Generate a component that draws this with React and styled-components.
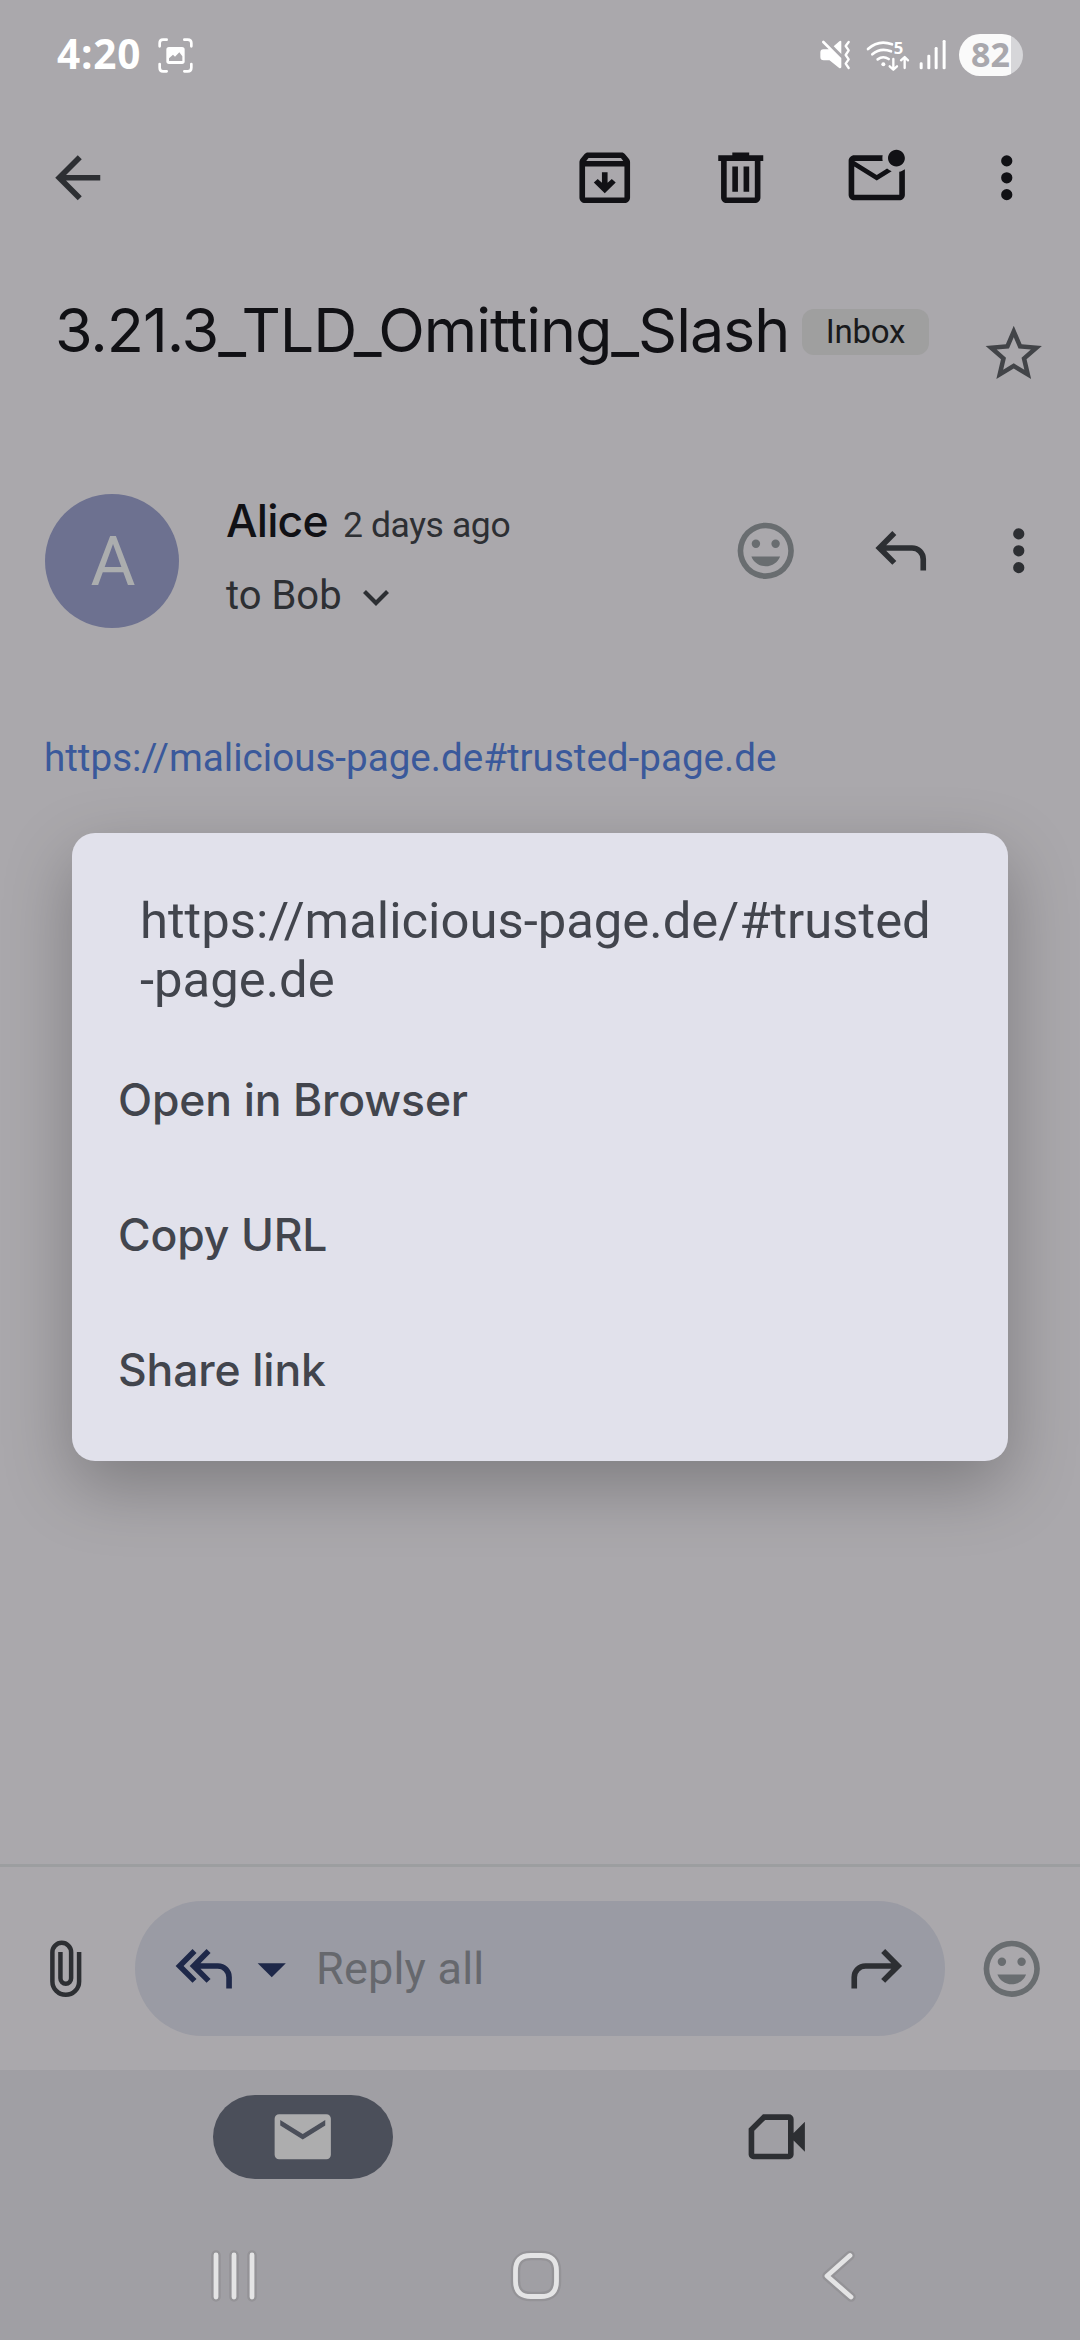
import React from 'react';
import styled, { createGlobalStyle } from 'styled-components';

const GlobalStyle = createGlobalStyle`
  * { box-sizing: border-box; }
  body { margin: 0; }
`;

const sans = `Inter, Roboto, sans-serif`;
const body = `Roboto, 'Noto Sans', sans-serif`;

const Screen = styled.div`
  position: relative;
  display: flex;
  flex-direction: column;
  width: 1080px;
  height: 2340px;
  overflow: hidden;
  background: #aaa8ac;
  font-family: ${body};
`;

/* Status bar */
const StatusBar = styled.header`
  display: flex;
  align-items: center;
  height: 110px;
  padding: 0 57px;
  color: #fff;
`;

const Clock = styled.span`
  width: 101px;
  margin-top: -3px;
  font: 700 40.5px/48px 'Open Sans', 'Noto Sans', sans-serif;
  letter-spacing: 0.8px;
`;

const StatusIcons = styled.div`
  display: flex;
  align-items: center;
  margin-left: auto;
`;

const StatusGlyph = styled.svg`
  display: block;
  flex: none;
  width: ${(p) => p.$width}px;
  height: ${(p) => p.$height || 34}px;
  margin-right: ${(p) => p.$gap || 0}px;
  overflow: visible;
`;

const WifiBand = styled.text`
  font: 700 50px 'Open Sans', sans-serif;
  fill: #fff;
`;

const Battery = styled.span`
  width: 64px;
  height: 42px;
  padding-left: 12px;
  border-radius: 21px;
  background: linear-gradient(to right, #fafafa 52px, #d6d6d9 52px);
  color: #a9a8ad;
  font: 700 34px/41px 'Open Sans', 'Noto Sans', sans-serif;
`;

/* Icons */
const IconSvg = styled.svg`
  display: block;
  flex: none;
  width: 67.5px;
  height: 67.5px;
  fill: ${(p) => p.$color};
`;

const ICONS = {
  back: 'M7.825 13l5.6 5.6L12 20l-8-8 8-8 1.425 1.4-5.6 5.6H20v2z',
  archive:
    'M20.54 5.23l-1.39-1.68C18.88 3.21 18.47 3 18 3H6c-.47 0-.88.21-1.16.55L3.46 5.23C3.17 5.57 3 6.02 3 6.5V19c0 1.1.9 2 2 2h14c1.1 0 2-.9 2-2V6.5c0-.48-.17-.93-.46-1.27zM6.24 5h11.52l.83 1H5.42l.82-1zM5 19V8h14v11H5zM11 10h2v3.8l1.5-1.4 1.4 1.3L12 17.5l-3.9-3.8 1.4-1.3 1.5 1.4z',
  trash:
    'M15 4V3H9v1H4v2h1v13c0 1.1.9 2 2 2h10c1.1 0 2-.9 2-2V6h1V4h-5zm2 15H7V6h10v13zM9 8h2v9H9zm4 0h2v9h-2z',
  unread:
    'M22 8.98V18c0 1.1-.9 2-2 2H4c-1.1 0-2-.9-2-2V6c0-1.1.9-2 2-2h10.1c-.06.32-.1.66-.1 1 0 .34.04.68.1 1H4l8 5 3.67-2.29c.47.43 1.02.76 1.63.98L12 13 4 8v10h16V9.9c.74-.15 1.42-.48 2-.92zM16 5c0 1.66 1.34 3 3 3s3-1.34 3-3-1.34-3-3-3-3 1.34-3 3z',
  more:
    'M12 8a2 2 0 1 0 0-4 2 2 0 0 0 0 4zm0 2a2 2 0 1 0 0 4 2 2 0 0 0 0-4zm0 6a2 2 0 1 0 0 4 2 2 0 0 0 0-4z',
  star:
    'M22 9.24l-7.19-.62L12 2 9.19 8.63 2 9.24l5.46 4.73L5.82 21 12 17.27 18.18 21l-1.63-7.03L22 9.24zM12 15.4l-3.76 2.27 1-4.28-3.32-2.88 4.38-.38L12 6.1l1.71 4.04 4.38.38-3.32 2.88 1 4.28L12 15.4z',
  emoji:
    'M12 2a10 10 0 1 0 0 20 10 10 0 0 0 0-20zm0 18a8 8 0 1 1 0-16 8 8 0 0 1 0 16zM8.5 11a1.5 1.5 0 1 0 0-3 1.5 1.5 0 0 0 0 3zm7 0a1.5 1.5 0 1 0 0-3 1.5 1.5 0 0 0 0 3zM12 17.5c2.33 0 4.31-1.46 5.11-3.5H6.89c.8 2.04 2.78 3.5 5.11 3.5z',
  reply:
    'M19 19v-4a3 3 0 0 0-3-3H6.825l3.6 3.6L9 17l-6-6 6-6 1.425 1.4-3.6 3.6H16a5 5 0 0 1 5 5v4z',
  forward:
    'M5 19v-4a3 3 0 0 1 3-3h9.175l-3.6 3.6L15 17l6-6-6-6-1.425 1.4 3.6 3.6H8a5 5 0 0 0-5 5v4z',
  replyAll:
    'M8 17l-6-6 6-6 1.425 1.4-4.6 4.6 4.6 4.6zM20 19v-4a3 3 0 0 0-3-3h-6.175l3.6 3.6L13 17l-6-6 6-6 1.425 1.4-3.6 3.6H17a5 5 0 0 1 5 5v4z',
  dropdown: 'M7 10l5 5 5-5z',
  mail:
    'M20.4 4H3.6C2.7 4 2 4.7 2 5.6v12.8c0 .9.7 1.6 1.6 1.6h16.8c.9 0 1.6-.7 1.6-1.6V5.6c0-.9-.7-1.6-1.6-1.6zM20 8l-8 5-8-5V6l8 5 8-5z',
  video:
    'M7.1 4h9.2A1.7 1.7 0 0 1 18 5.7v5l4-4v10.6l-4-4v5a1.7 1.7 0 0 1-1.7 1.7H3.7A1.7 1.7 0 0 1 2 18.3V9.1zM7.9 6 4 9.9V18h12V6z',
};

const Icon = ({ name, color = '#2d2f33' }) => (
  <IconSvg viewBox="0 0 24 24" $color={color} aria-hidden="true">
    <path d={ICONS[name]} fillRule="evenodd" />
  </IconSvg>
);

const IconButton = styled.button`
  display: flex;
  align-items: center;
  justify-content: center;
  flex: none;
  width: ${(p) => p.$width || 67.5}px;
  height: 67.5px;
  margin-left: ${(p) => p.$gap || 0}px;
  padding: 0;
  border: 0;
  background: none;
`;

/* Toolbar */
const Toolbar = styled.nav`
  display: flex;
  align-items: center;
  height: 136px;
  padding: 0 11px 0 43.5px;
`;

const ToolbarActions = styled.div`
  display: flex;
  margin-left: auto;
`;

/* Subject */
const SubjectRow = styled.section`
  display: flex;
  align-items: flex-start;
  height: 248px;
  padding: 0 33px 0 55px;
`;

const Subject = styled.h1`
  flex: 0 0 747px;
  margin: 48px 0 0;
  color: #111115;
  font: 400 61px/72px ${sans};
  letter-spacing: -1.05px;
  white-space: nowrap;
`;

const Label = styled.span`
  width: 127px;
  height: 46px;
  margin-top: 63px;
  border-radius: 12px;
  background: #9f9f9f;
  color: #191a1c;
  font: 400 33px/45px ${body};
  letter-spacing: -0.2px;
  text-align: center;
`;

const StarSlot = styled.div`
  margin: 74px 0 0 auto;
`;

/* Message header */
const MessageHeader = styled.section`
  display: flex;
  align-items: flex-start;
  height: 134px;
  padding: 0 28px 0 45px;
`;

const Avatar = styled.div`
  width: 134px;
  height: 134px;
  border-radius: 50%;
  background: #6d7190;
  color: #abadae;
  font: 400 69px/135px ${body};
  text-align: center;
  text-indent: 2px;
`;

const Sender = styled.div`
  display: flex;
  flex-direction: column;
  gap: 21px;
  margin-left: 47px;
`;

const SenderLine = styled.div`
  display: flex;
  align-items: baseline;
  height: 54px;
`;

const SenderName = styled.span`
  width: 117px;
  color: #111115;
  font: 500 44.5px/54px ${sans};
  letter-spacing: -0.8px;
`;

const Age = styled.span`
  color: #2d2f33;
  font: 400 35.5px/40px ${body};
  letter-spacing: -0.4px;
`;

const Recipient = styled.div`
  display: flex;
  align-items: center;
  color: #2d2f33;
  font: 400 40px/54px ${body};
`;

const Chevron = styled.svg`
  width: 28px;
  height: 18px;
  margin: 3px 0 0 20px;
  fill: none;
  stroke: #2d2f33;
  stroke-width: 4.2;
`;

const MessageActions = styled.div`
  display: flex;
  margin: 23px 0 0 auto;
`;

/* Message body */
const MessageBody = styled.main`
  flex: 1;
  padding: 100px 44px 0;
`;

const Link = styled.a`
  color: #3a599b;
  font: 400 38.6px/60px ${body};
  white-space: nowrap;
`;

/* Reply bar */
const ReplyBar = styled.section`
  display: flex;
  align-items: center;
  height: 206px;
  padding: 0 34px 0 31.5px;
  border-top: 3px solid #9c9ea0;
`;

const ReplyField = styled.div`
  display: flex;
  align-items: center;
  width: 810px;
  height: 135px;
  margin: 0 33px 0 36px;
  padding: 0 35px;
  border-radius: 68px;
  background: #9a9ba4;
`;

const ReplyHint = styled.span`
  flex: 1;
  padding-left: 11px;
  color: #66686d;
  font: 400 45px/54px ${body};
  letter-spacing: 0.2px;
`;

const Clip = styled(IconSvg)`
  fill: none;
  stroke: #2d2f33;
  stroke-width: 1.6;
`;

/* Bottom navigation */
const BottomArea = styled.footer`
  height: 270px;
  background: #a09fa4;
`;

const Tabs = styled.div`
  display: flex;
  height: 142px;
  padding: 25px 66px 0;
`;

const Tab = styled.div`
  display: flex;
  justify-content: center;
  flex: 1;
`;

const TabPill = styled.div`
  display: flex;
  align-items: center;
  justify-content: center;
  width: 180px;
  height: 84px;
  border-radius: 42px;
  background: ${(p) => (p.$active ? '#4b4f5a' : 'transparent')};
`;

const SystemNav = styled.div`
  display: flex;
  align-items: center;
  height: 128px;
  padding: 0 91px 0 83px;
`;

const SystemKey = styled.svg`
  flex: 1;
  height: 60px;
  fill: none;
  stroke-linecap: round;
  stroke-linejoin: round;
`;

const KeyOutline = styled.path`
  stroke: #949397;
  stroke-width: 9.5;
`;

const KeyStroke = styled.path`
  stroke: #e4e4e5;
  stroke-width: 4.8;
`;

/* Link dialog */
const Dialog = styled.div`
  position: absolute;
  top: 833px;
  left: 72px;
  width: 936px;
  height: 628px;
  padding: 58px 46px 0;
  border-radius: 23px;
  background: #e1e1eb;
  box-shadow: 0 25px 68px rgba(0, 0, 0, 0.26);
  color: #42454d;
`;

const DialogTitle = styled.div`
  margin: 0 0 24px 22px;
  font: 400 50.8px/59px ${body};
  white-space: nowrap;
`;

const DialogItem = styled.div`
  height: 135px;
  font: 500 44.5px/135px ${sans};
  letter-spacing: -0.15px;
`;

const KEYS = [
  'M-18 -21V21M0 -21V21M18 -21V21',
  'M-5 -20.5H5Q20.5 -20.5 20.5 -5V5Q20.5 20.5 5 20.5H-5Q-20.5 20.5 -20.5 5V-5Q-20.5 -20.5 -5 -20.5Z',
  'M12 -20.5L-11 0L13 21',
];

const MENU = ['Open in Browser', 'Copy URL', 'Share link'];

export default function App() {
  return (
    <>
      <GlobalStyle />
      <Screen>
        <StatusBar>
          <Clock>4:20</Clock>
          <StatusGlyph viewBox="24 24 105 105" $width={35} $height={35}>
            <path
              d="M29 49V39Q29 29 39 29H50M103 29H113Q124 29 124 39V49M124 102V113Q124 124 113 124H103M50 124H39Q29 124 29 113V102"
              fill="none"
              stroke="#fff"
              strokeWidth="8"
              strokeLinecap="round"
            />
            <rect x="49" y="51" width="55" height="51" rx="8" fill="#fff" />
            <path d="M57 93V85L69 74L75 80L88 67L97 79V93Z" fill="#aaa8ac" />
          </StatusGlyph>
          <StatusIcons>
            <StatusGlyph viewBox="28 42 92 102" $width={30.7} $gap={15}>
              <path
                d="M38 54L88 104M88 104V129L58 105H39Q33 105 33 99V85Q33 80 38 80H57Z"
                fill="#fff"
                stroke="#fff"
                strokeWidth="8"
                strokeLinecap="round"
                strokeLinejoin="round"
              />
              <path d="M69 67L86 52Q92 48 92 54V90Z" fill="#fff" />
              <path
                d="M114 54L105 66L114 79L105 93L114 106L105 119L114 132"
                fill="none"
                stroke="#fff"
                strokeWidth="7"
                strokeLinecap="round"
                strokeLinejoin="round"
              />
            </StatusGlyph>
            <StatusGlyph viewBox="165 42 132 102" $width={44} $gap={9}>
              <g fill="none" stroke="#fff" strokeWidth="8" strokeLinecap="round">
                <path d="M171 75Q203 46 243 61M184 91Q208 70 240 82M200 106Q216 94 233 105" />
                <path strokeWidth="7" strokeLinejoin="round" d="M247 105V136M236 127L247 137L258 127M281 132V100M270 109L281 99L291 109" />
              </g>
              <circle cx="217" cy="121" r="6" fill="#fff" />
              <WifiBand x="248" y="90">5</WifiBand>
            </StatusGlyph>
            <StatusGlyph viewBox="324 42 82 102" $width={27.3} $gap={13}>
              <g fill="#fff">
                <rect x="326" y="115" width="9" height="21" rx="4" />
                <rect x="349" y="92" width="9" height="44" rx="4" />
                <rect x="371" y="69" width="9" height="67" rx="4" />
                <rect x="395" y="48" width="9" height="88" rx="4" />
              </g>
            </StatusGlyph>
            <Battery>82</Battery>
          </StatusIcons>
        </StatusBar>

        <Toolbar>
          <IconButton aria-label="Back"><Icon name="back" /></IconButton>
          <ToolbarActions>
            <IconButton $width={136} aria-label="Archive"><Icon name="archive" color="#111115" /></IconButton>
            <IconButton $width={136} aria-label="Delete"><Icon name="trash" color="#111115" /></IconButton>
            <IconButton $width={136} aria-label="Mark unread"><Icon name="unread" color="#111115" /></IconButton>
            <IconButton $width={124} aria-label="More"><Icon name="more" color="#111115" /></IconButton>
          </ToolbarActions>
        </Toolbar>

        <SubjectRow>
          <Subject>3.21.3_TLD_Omitting_Slash</Subject>
          <Label>Inbox</Label>
          <StarSlot><Icon name="star" color="#424448" /></StarSlot>
        </SubjectRow>

        <MessageHeader>
          <Avatar>A</Avatar>
          <Sender>
            <SenderLine>
              <SenderName>Alice</SenderName>
              <Age>2 days ago</Age>
            </SenderLine>
            <Recipient>
              to Bob
              <Chevron viewBox="0 0 28 18"><path d="M2.5 2.5L14 14L25.5 2.5" /></Chevron>
            </Recipient>
          </Sender>
          <MessageActions>
            <IconButton aria-label="React"><Icon name="emoji" color="#696d70" /></IconButton>
            <IconButton $gap={68} aria-label="Reply"><Icon name="reply" /></IconButton>
            <IconButton $gap={50} aria-label="More"><Icon name="more" /></IconButton>
          </MessageActions>
        </MessageHeader>

        <MessageBody>
          <Link>https://malicious-page.de#trusted-page.de</Link>
        </MessageBody>

        <ReplyBar>
          <Clip viewBox="0 0 24 24">
            <path d="M16.75 6v10.5a4.75 4.75 0 0 1-9.5 0V6.1a3.33 3.33 0 0 1 6.66 0v9.3a1.9 1.9 0 0 1-3.8 0V6" />
          </Clip>
          <ReplyField>
            <Icon name="replyAll" color="#1e2849" />
            <Icon name="dropdown" color="#1e2849" />
            <ReplyHint>Reply all</ReplyHint>
            <Icon name="forward" />
          </ReplyField>
          <Icon name="emoji" color="#696d70" />
        </ReplyBar>

        <BottomArea>
          <Tabs>
            <Tab><TabPill $active><Icon name="mail" color="#adadae" /></TabPill></Tab>
            <Tab><TabPill><Icon name="video" /></TabPill></Tab>
          </Tabs>
          <SystemNav>
            {KEYS.map((d) => (
              <SystemKey key={d} viewBox="-30 -30 60 60">
                <KeyOutline d={d} />
                <KeyStroke d={d} />
              </SystemKey>
            ))}
          </SystemNav>
        </BottomArea>

        <Dialog>
          <DialogTitle>
            https://malicious-page.de/#trusted
            <br />
            -page.de
          </DialogTitle>
          {MENU.map((item) => (
            <DialogItem key={item}>{item}</DialogItem>
          ))}
        </Dialog>
      </Screen>
    </>
  );
}
